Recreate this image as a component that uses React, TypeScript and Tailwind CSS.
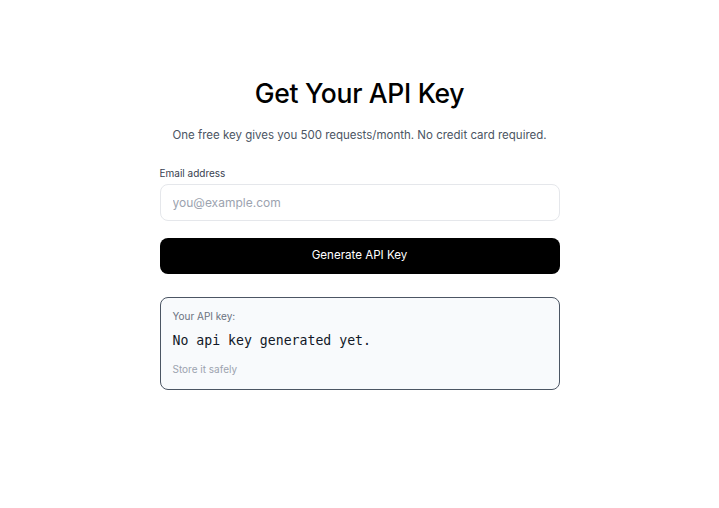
export default function App() {
  return (
    <div className="min-h-screen bg-white font-['Inter',sans-serif] text-black">
      <div className="mx-auto w-[400px] pt-[75px]">
        <h1 className="text-center text-[26.5px] font-medium leading-[36px] tracking-[-0.3px]">
          Get Your API Key
        </h1>
        <p className="mt-[16px] text-center text-[11.5px] leading-[16px] text-[#4b5563]">
          One free key gives you 500 requests/month. No credit card required.
        </p>

        <label className="mt-[23px] block text-[10px] leading-[14px] text-[#374151]">
          Email address
        </label>
        <input
          type="email"
          placeholder="you@example.com"
          className="mt-[4px] h-[37px] w-full rounded-lg border border-[#e5e7eb] px-[12px] text-[12px] outline-none placeholder:text-[#9ca3af]"
        />

        <button
          type="button"
          className="mt-[17px] h-[36px] w-full rounded-lg bg-black text-[11.6px] text-white"
        >
          Generate API Key
        </button>

        <div className="mt-[23px] rounded-lg border border-[#4b5563] bg-[#f8fafc] px-[12px] pb-[13px] pt-[11px]">
          <p className="text-[10px] leading-[14px] text-[#6b7280]">Your API key:</p>
          <p className="mt-[8px] font-['DejaVu_Sans_Mono',monospace] text-[13.2px] leading-[20px] text-[#111827]">
            No api key generated yet.
          </p>
          <p className="mt-[11px] text-[10px] leading-[14px] text-[#9ca3af]">Store it safely</p>
        </div>
      </div>
    </div>
  );
}
